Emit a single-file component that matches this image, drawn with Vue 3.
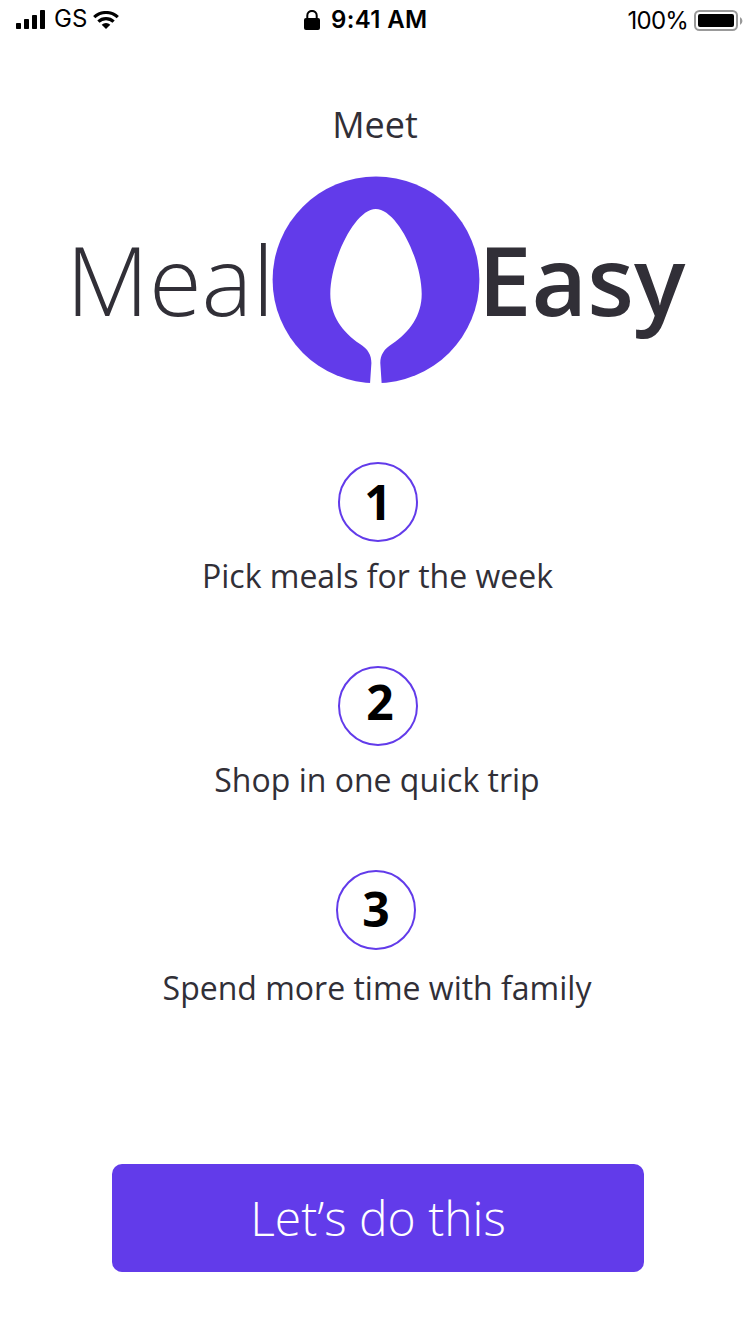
<script setup>
const steps = [
  { number: 1, label: 'Pick meals for the week' },
  { number: 2, label: 'Shop in one quick trip' },
  { number: 3, label: 'Spend more time with family' },
]
</script>

<template>
  <main class="screen">
    <header class="status">
      <div class="carrier">
        <svg class="signal" width="30" height="20" viewBox="0 0 30 20">
          <rect x="0" y="13" width="5" height="6" rx="0.8" />
          <rect x="8" y="9" width="5" height="10" rx="0.8" />
          <rect x="16" y="5" width="5" height="14" rx="0.8" />
          <rect x="24" y="0" width="5" height="19" rx="0.8" />
        </svg>
        <span class="network">GS</span>
        <svg class="wifi" width="26" height="18" viewBox="0 0 26 18">
          <path d="M1.2 6.2 A17.2 17.2 0 0 1 24.8 6.2" />
          <path d="M5.4 10.7 A11 11 0 0 1 20.6 10.7" />
          <path class="dot" d="M8.7 13.8 A6 6 0 0 1 17.3 13.8 L13 17.9 Z" />
        </svg>
      </div>
      <div class="clock">
        <svg class="lock" width="16" height="20" viewBox="0 0 16 20">
          <path d="M3.3 10 V5.6 a4.7 4.7 0 0 1 9.4 0 V10" />
          <rect x="0" y="8" width="16" height="12" rx="2" />
        </svg>
        <span class="time">9:41 AM</span>
      </div>
      <div class="power">
        <span class="percent">100%</span>
        <svg class="battery" width="49" height="22" viewBox="0 0 49 22">
          <rect class="shell" x="1" y="1" width="42" height="19" rx="4.5" />
          <rect x="4" y="4" width="36" height="13" rx="2" />
          <path class="cap" d="M46 7 a4.5 4.5 0 0 1 0 8 Z" />
        </svg>
      </div>
    </header>

    <p class="intro">Meet</p>
    <h1 class="brand">
      <span class="meal">Meal</span>
      <svg class="spoon" width="208" height="208" viewBox="0 0 208 208">
        <circle cx="104" cy="103.8" r="103.4" />
        <path d="M103.7 33 C125 33 149.7 84 149.7 118 C149.7 139 138 156 120 168 C112 173 108.3 179 108.3 187 L109.7 208 H98 L99.4 187 C99.4 179 96 173 88 168 C70 156 58.3 139 58.3 118 C58.3 84 83 33 103.7 33 Z" />
      </svg>
      <span class="easy">Easy</span>
    </h1>

    <ol class="steps">
      <li v-for="step in steps" :key="step.number" :class="['step', `step-${step.number}`]">
        <div class="badge">{{ step.number }}</div>
        <p class="label">{{ step.label }}</p>
      </li>
    </ol>

    <button class="start" type="button">Let’s do this</button>
  </main>
</template>

<style>
body {
  margin: 0;
  background: #fff;
}
</style>

<style scoped>
.screen {
  box-sizing: border-box;
  width: 750px;
  height: 1334px;
  overflow: hidden;
  background: #fff;
  color: #312f37;
  font-family: "Open Sans", "Noto Sans", sans-serif;
}
.status {
  display: grid;
  grid-template-columns: 250px 1fr 250px;
  grid-template-rows: 40px;
  height: 40px;
  color: #000;
  font-family: Inter, sans-serif;
  font-size: 24px;
  line-height: 30px;
}
.carrier,
.clock,
.power {
  display: flex;
  align-items: center;
  white-space: nowrap;
}
.carrier {
  padding-left: 16px;
}
.network {
  margin: 0 6px 0 8px;
  padding-bottom: 2px;
}
.wifi path {
  fill: none;
  stroke: #000;
  stroke-width: 3.2;
}
.wifi .dot {
  fill: #000;
  stroke: none;
}
.clock {
  padding-left: 54px;
  gap: 11px;
  font-weight: 600;
}
.time {
  letter-spacing: 0.35px;
}
.lock path {
  fill: none;
  stroke: #000;
  stroke-width: 2;
}
.power {
  justify-content: flex-end;
  padding-right: 7px;
  gap: 6px;
}
.percent {
  padding-top: 2px;
  letter-spacing: -0.8px;
}
.battery {
  margin-top: 2px;
}
.power .shell {
  fill: none;
  stroke: #999;
  stroke-width: 2;
}
.power .cap {
  fill: #999;
}
.intro {
  margin: 61px 0 0;
  font-size: 36px;
  line-height: 48px;
  text-align: center;
}
.brand {
  display: flex;
  align-items: center;
  margin: 27px 0 0 66px;
  font-size: 96px;
  line-height: 130px;
  white-space: nowrap;
}
.meal,
.easy {
  padding-bottom: 3px;
}
.meal {
  width: 206px;
  font-weight: 300;
}
.easy {
  margin-left: -2px;
  font-weight: 600;
}
.spoon {
  flex: none;
}
.spoon circle {
  fill: #623bea;
}
.spoon path {
  fill: #fff;
}
.steps {
  margin: 78px 0 0;
  padding: 0;
  list-style: none;
}
.step {
  display: flex;
  flex-direction: column;
  align-items: center;
  height: 204px;
  padding-left: 6px;
}
.step-3 {
  padding-left: 2px;
}
.badge {
  box-sizing: border-box;
  width: 80px;
  height: 80px;
  border: 2px solid #623bea;
  border-radius: 50%;
  color: #000;
  font-size: 48px;
  font-weight: 700;
  line-height: 76px;
  text-align: center;
}
.step-2 .badge {
  padding-left: 4px;
  line-height: 68px;
}
.step-3 .badge {
  line-height: 73px;
}
.label {
  margin: 10px 0 0;
  font-size: 32px;
  line-height: 48px;
  white-space: nowrap;
}
.step-1 .label {
  padding-right: 1px;
}
.step-2 .label {
  padding-right: 2px;
}
.step-3 .label {
  margin-top: 14px;
  padding-left: 2px;
}
.start {
  display: block;
  width: 532px;
  height: 108px;
  margin: 90px 0 0 112px;
  padding: 0;
  border: 0;
  border-radius: 10px;
  background: #623bea;
  color: #fff;
  font-family: inherit;
  font-size: 48px;
  font-weight: 300;
  line-height: 108px;
}
</style>
